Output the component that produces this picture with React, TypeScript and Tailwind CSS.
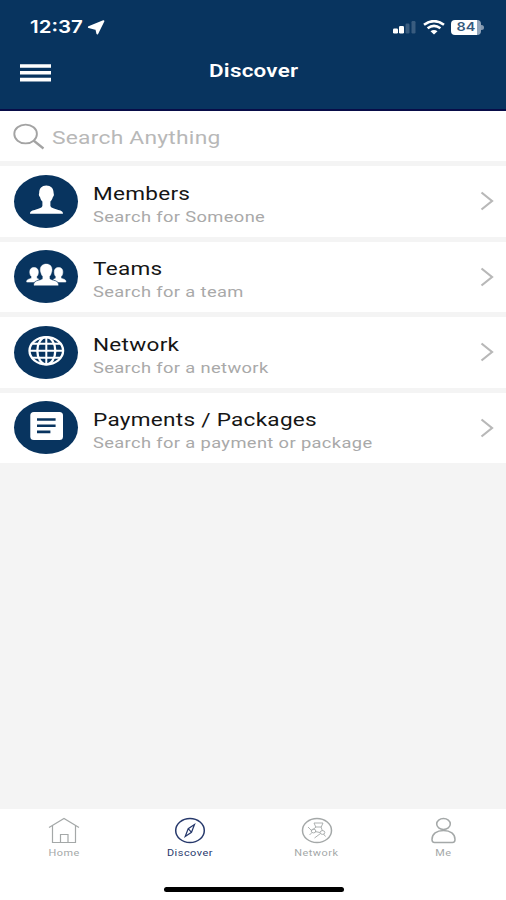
import type { ReactNode } from 'react';

function MemberIcon() {
  return (
    <svg viewBox="0 0 64 53" className="h-[53px] w-16" fill="white">
      <path d="M32.3 10.5c4.600 0 7.300 2.900 7.300 7.200 0 1 .4 1 .3 2.200-.1 1.200-.8 1.500-1 2-.6 2.200-1.500 3.700-2.500 4.700v4.400c.5 1.800 3.400 2.400 6.600 3.500 3.600 1.100 6 1.300 6 4.300H16c0-3 2.400-3.200 6-4.300 3.200-1.100 6-1.700 6.400-3.500v-4.400c-1.100-1-1.900-2.500-2.400-4.700-.3-.5-1-.8-1.100-2-.1-1.200.3-1.200.3-2.200 0-4.300 2.600-7.200 7.100-7.200z" />
    </svg>
  );
}

function TeamIcon() {
  const person =
    'M32.300 14c3.700 0 5.700 2.300 5.700 5.600 0 2-.3 2.500-.7 3.300-.4 1.700-1 2.700-1.800 3.400v2.200c.8 1.500 2.800 1.700 5.200 2.500 2.400.7 3.500 1.700 3.500 4.300H20c0-2.600 1.200-3.600 3.500-4.300 2.400-.8 4.700-1 5.300-2.500v-2.200c-.8-.7-1.400-1.700-1.800-3.400-.4-.8-.7-1.300-.7-3.300 0-3.300 2.300-5.600 6-5.600z';
  return (
    <svg viewBox="0 0 64 53" className="h-[53px] w-16" fill="white">
      <path d="M20 17.500c2.800 0 4.300 1.800 4.300 4.300 0 2.400-.4 3.600-1.600 4.800v1.500c.4.700 1.500 1 2.500 1.300l-4 2.600H12.700c0-1.900.8-2.500 2.700-3 1.300-.4 2-.5 2.200-1v-1.400c-1.300-1.200-1.800-2.400-1.800-4.800 0-2.500 1.400-4.300 4.200-4.300z" stroke="white" strokeWidth=".6" />
      <path d="M44.600 17.500c-2.800 0-4.300 1.800-4.300 4.300 0 2.400.4 3.600 1.600 4.800v1.500c-.4.700-1.500 1-2.500 1.300l4 2.600h8.500c0-1.900-.8-2.500-2.700-3-1.300-.4-2-.5-2.200-1v-1.400c1.300-1.200 1.800-2.400 1.800-4.800 0-2.500-1.400-4.300-4.200-4.300z" stroke="white" strokeWidth=".6" />
      <path d={person} stroke="#08345f" strokeWidth="1.800" />
      <path d={person} stroke="white" strokeWidth=".4" />
    </svg>
  );
}

function GlobeIcon() {
  return (
    <svg viewBox="0 0 64 53" className="h-[53px] w-16" fill="none" stroke="white" strokeWidth="2.300">
      <ellipse cx="32.300" cy="24.800" rx="16.800" ry="13.600" />
      <ellipse cx="32.300" cy="24.800" rx="9" ry="13.600" />
      <path d="M32.300 11.300v27M15.500 24.800h33.600M18.500 17.800h27.600M18.500 31.800h27.600" strokeWidth="2" />
    </svg>
  );
}

function DocumentIcon() {
  return (
    <svg viewBox="0 0 64 53" className="h-[53px] w-16" fill="none">
      <rect x="16.300" y="11" width="32.700" height="28" rx="3.500" fill="white" />
      <path d="M23 18.500h18.600M23 24.700h18.600M23 30.900h13.400" stroke="#08345f" strokeWidth="2.600" />
    </svg>
  );
}

const rows = [
  { title: 'Members', text: 'Search for Someone', icon: <MemberIcon /> },
  { title: 'Teams', text: 'Search for a team', icon: <TeamIcon /> },
  { title: 'Network', text: 'Search for a network', icon: <GlobeIcon /> },
  { title: 'Payments / Packages', text: 'Search for a payment or package', icon: <DocumentIcon /> },
];

function Header() {
  return (
    <header className="h-[111px] border-b-2 border-[#080c48] bg-[#08345f] text-white">
      <div className="flex h-[54px] items-center justify-between pl-[30px] pr-[22px]">
        <div className="flex items-center">
          <span className="w-[57px] origin-left scale-x-[1.17] whitespace-nowrap font-['Inter',sans-serif] text-[17.500px] font-semibold leading-6">
            12:37
          </span>
          <svg viewBox="0 0 18 15" className="h-[15px] w-[18px]" fill="white">
            <path d="M16.500 1.200 10.300 13.500 9.300 9 1.800 7.200z" stroke="white" strokeWidth="1.800" strokeLinejoin="round" />
          </svg>
        </div>
        <div className="flex items-center">
          <svg viewBox="0 0 24 14" className="mr-[6px] h-[14px] w-6" fill="white">
            <rect x="0" y="8.500" width="5" height="5" rx="1.200" />
            <rect x="6" y="6" width="5" height="7.500" rx="1.200" />
            <rect x="12.500" y="3.500" width="4" height="10" rx="1.200" opacity=".2" />
            <rect x="18.500" y="1" width="4" height="12.500" rx="1.200" opacity=".2" />
          </svg>
          <svg viewBox="0 0 22 15" className="mr-[6px] h-[15px] w-[22px]" fill="none" stroke="white">
            <path d="M1 4.800q10-7.300 20 0M4.600 8.300q6.400-4.800 12.800 0" strokeWidth="2.600" />
            <path d="m7.500 11.300 3.500 3.200 3.500-3.200q-3.500-2.400-7 0z" fill="white" stroke="none" />
          </svg>
          <div className="flex h-[15px] w-[30px] items-center justify-center rounded-[4px] bg-linear-to-r from-white from-85% to-[#91a5bb] to-85% font-['Inter',sans-serif] text-[12px] font-semibold text-[#35597d]">
            <span className="scale-x-[1.2]">84</span>
          </div>
          <div className="h-[5px] w-[3px] rounded-r-full bg-[#8498ae]" />
        </div>
      </div>
      <div className="grid h-[38px] grid-cols-3 items-center px-5">
        <button aria-label="Menu" className="flex w-[31px] flex-col">
          <svg viewBox="0 0 31 18" className="h-[18px] w-[31px]" stroke="white" strokeWidth="3.600">
            <path d="M0 2h31M0 8.800h31M0 15.600h31" />
          </svg>
        </button>
        <h1 className="-mt-[5px] translate-x-px scale-x-[1.18] text-center text-[19px] font-semibold leading-6 tracking-[0.2px]">
          Discover
        </h1>
      </div>
    </header>
  );
}

function SearchBar() {
  return (
    <div className="flex h-[50px] items-center bg-white pl-[13px]">
      <svg viewBox="0 0 32 27" className="h-[27px] w-8" fill="none" stroke="#a3a3a3" strokeWidth="1.900">
        <ellipse cx="12.600" cy="11" rx="11.300" ry="9.400" />
        <path d="m20.500 17.500 10 8" strokeWidth="2.300" />
      </svg>
      <span className="ml-[7px] mt-[4px] origin-left scale-x-[1.2] whitespace-nowrap text-[19px] leading-6 tracking-[0.2px] text-[#b8b8b8]">
        Search Anything
      </span>
    </div>
  );
}

function DiscoverRow({ title, text, icon }: { title: string; text: string; icon: ReactNode }) {
  return (
    <button className="flex h-[70.500px] items-center bg-white pl-[14px] pr-3 text-left">
      <span className="h-[53px] w-16 shrink-0 rounded-[50%] bg-[#08345f]">{icon}</span>
      <span className="ml-[15px] flex flex-1 flex-col pt-[8px]">
        <span className="origin-left scale-x-[1.22] whitespace-nowrap text-[18.500px] leading-[23px] tracking-[0.22px] text-[#151515]">
          {title}
        </span>
        <span className="origin-left scale-x-[1.22] whitespace-nowrap text-[15px] leading-[22px] tracking-[0.3px] text-[#a9a9a9]">
          {text}
        </span>
      </span>
      <svg viewBox="0 0 14 20" className="h-5 w-[14px]" fill="none" stroke="#b8b8b8" strokeWidth="2.200">
        <path d="m1.500 1.500 10.500 8.500-10.500 8.500" />
      </svg>
    </button>
  );
}

const tabs = [
  {
    label: 'Home',
    icon: <path d="M1 10.500 16 1.500l15 9M4.500 8.500v17h23v-17M12.500 25.500v-8h7.500v8" />,
  },
  {
    label: 'Discover',
    active: true,
    icon: (
      <>
        <ellipse cx="16" cy="13.500" rx="14.300" ry="12" strokeWidth="1.500" />
        <path d="m20.500 7.500-6.300 4.200-3 7.800 6.300-4.200zM14.200 11.700l3.300 3.600" />
      </>
    ),
  },
  {
    label: 'Network',
    icon: (
      <>
        <ellipse cx="16" cy="13.500" rx="14.500" ry="12" strokeWidth="1.500" />
        <g strokeWidth=".9">
          <path d="M13 6h9l-1.800 4h-5.400zM15 10l-3.500 3M20 10l1.500 4M7 10l4 4M14 14.500l5 1" />
          <ellipse cx="12.500" cy="14" rx="2.300" ry="1.900" />
          <ellipse cx="21.500" cy="15.500" rx="2.300" ry="1.900" />
          <path d="m8.500 18 2.500-2.500M13.500 21l6-4.500M24.500 19.500l-2-2.500" />
        </g>
      </>
    ),
  },
  {
    label: 'Me',
    icon: (
      <g strokeWidth="1.500">
        <ellipse cx="16.500" cy="7" rx="6.800" ry="5.500" />
        <path d="M5 22.500c0-5.500 4.500-9 11.500-9s11.500 3.500 11.500 9c0 2-.8 3-2.500 3H7.500c-1.700 0-2.500-1-2.500-3z" />
      </g>
    ),
  },
];

function TabBar() {
  return (
    <footer className="flex h-[91px] flex-col bg-white">
      <nav className="grid flex-1 grid-cols-4 pl-px pt-2">
        {tabs.map((tab) => (
          <button
            key={tab.label}
            className={`flex flex-col items-center ${tab.active ? 'text-[#26386b]' : 'text-[#a4a8a8]'}`}
          >
            <svg viewBox="0 0 32 27" className="h-[27px] w-8" fill="none" stroke="currentColor" strokeWidth="1.200">
              {tab.icon}
            </svg>
            <span className="mt-[3px] scale-x-[1.28] text-[8.500px] leading-3 tracking-[0.4px]">{tab.label}</span>
          </button>
        ))}
      </nav>
      <div className="mx-auto mb-[8px] h-[5px] w-[180px] translate-x-px rounded-full bg-black" />
    </footer>
  );
}

export default function App() {
  return (
    <div className="flex h-[900px] w-[506px] flex-col overflow-hidden bg-[#f4f4f4] font-['Roboto',sans-serif]">
      <Header />
      <main className="flex flex-1 flex-col gap-[5px]">
        <SearchBar />
        {rows.map((row) => (
          <DiscoverRow key={row.title} {...row} />
        ))}
      </main>
      <TabBar />
    </div>
  );
}
